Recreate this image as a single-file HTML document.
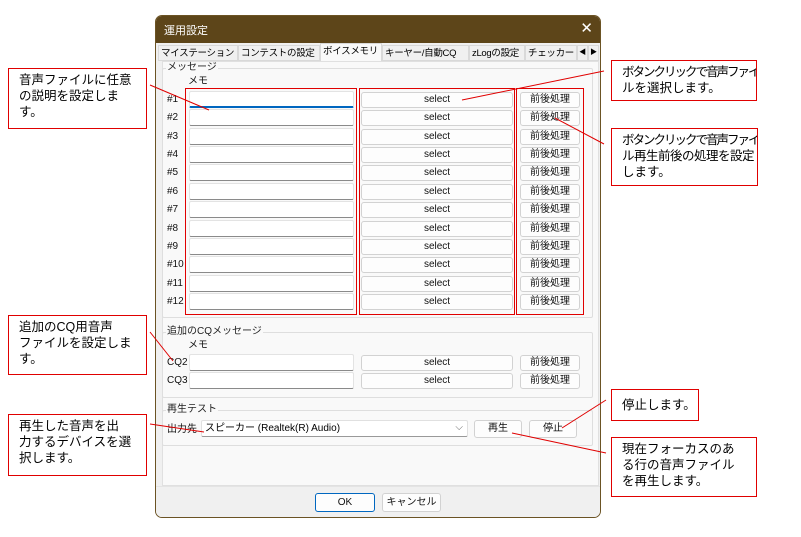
<!DOCTYPE html>
<html><head><meta charset="utf-8"><style>
*{box-sizing:border-box;margin:0;padding:0}
body{width:801px;height:537px;background:#fff;position:relative;overflow:hidden;font-family:"Liberation Sans","Noto Sans CJK JP",sans-serif;font-size:10px;color:#000}
.a{position:absolute}
.dlg{left:155px;top:15px;width:446px;height:503px;border:1px solid #6b5324;border-radius:7px;background:#f0f0f0;overflow:hidden}
.title{left:0;top:0;width:446px;height:27px;background:#5d4519;color:#fff;font-size:11px;padding:6px 0 0 8px}
.tabs{left:0;top:27px;width:446px;height:18px;background:#f0f0f0}
.tab{position:absolute;top:2px;height:16px;border:1px solid #d9d9d9;background:#f0f0f0;font-size:9.5px;letter-spacing:-0.3px;padding:1px 2px;white-space:nowrap;overflow:hidden;line-height:13px}
.page{left:6px;top:45px;width:437px;height:425px;background:#f9f9f9;border:1px solid #e0e0e0}
.grp{position:absolute;border:1px solid #dedede;border-radius:2px}
.gl{position:absolute;background:#f9f9f9;font-size:10px;padding:0 1px;color:#222;line-height:12px}
.ed{position:absolute;background:#fff;border:1px solid #e3e3e3;border-bottom:1px solid #8a8a8a;border-radius:2px;height:17px}
.bt{position:absolute;background:#fdfdfd;border:1px solid #d2d2d2;border-radius:3px;height:16px;text-align:center;font-size:10px;line-height:14px;color:#111}
.lb{position:absolute;font-size:10px;color:#111;line-height:12px}
.red{position:absolute;border:1px solid #e00000}
.call{position:absolute;border:1px solid #e00000;background:#fff;font-size:12.5px;line-height:16px;padding:3px 0 0 10px;color:#000;white-space:nowrap;overflow:hidden}
.tight{letter-spacing:-2px}
</style></head><body>
<div class="a dlg">
 <div class="a title">運用設定<span style="position:absolute;right:9px;top:3px;font-size:15px;font-weight:300">✕</span></div>
 <div class="a tabs">
  <div class="tab" style="left:2px;width:80px">マイステーション</div>
  <div class="tab" style="left:82px;width:82px">コンテストの設定</div>
  <div class="tab" style="left:164px;width:62px;top:0;height:18px;background:#f9f9f9;border-bottom:none">ボイスメモリ</div>
  <div class="tab" style="left:226px;width:87px">キーヤー/自動CQ</div>
  <div class="tab" style="left:313px;width:56px">zLogの設定</div>
  <div class="tab" style="left:369px;width:52px">チェッカー</div>
  <div class="tab" style="left:421px;width:11px;padding:0;font-size:7px;text-align:center;line-height:13px">◀</div>
  <div class="tab" style="left:432px;width:11px;padding:0;font-size:7px;text-align:center;line-height:13px">▶</div>
 </div>
 <div class="a page"></div>
 <div class="a" style="left:0;top:470px;width:446px;height:33px;background:#f0f0f0;border-top:1px solid #e4e4e4"></div>
 <div class="bt" style="left:159px;top:477px;width:60px;height:19px;border:1px solid #0067c0;line-height:17px">OK</div>
 <div class="bt" style="left:226px;top:477px;width:59px;height:19px;line-height:17px">キャンセル</div>
</div>
<div class="grp" style="left:162px;top:68px;width:431px;height:250px"></div>
<div class="gl" style="left:166px;top:62px">メッセージ</div>
<div class="lb" style="left:188px;top:76px">メモ</div>
<div class="grp" style="left:162px;top:332px;width:431px;height:66px"></div>
<div class="gl" style="left:166px;top:326px">追加のCQメッセージ</div>
<div class="lb" style="left:188px;top:340px">メモ</div>
<div class="grp" style="left:162px;top:410px;width:431px;height:36px"></div>
<div class="gl" style="left:166px;top:404px">再生テスト</div>
<div id="rows"></div>
<div class="lb" style="left:167px;top:357px">CQ2</div>
<div class="ed" style="left:189px;top:354px;width:165px"></div>
<div class="bt" style="left:361px;top:355px;width:152px">select</div>
<div class="bt" style="left:520px;top:355px;width:60px">前後処理</div>
<div class="lb" style="left:167px;top:375px">CQ3</div>
<div class="ed" style="left:189px;top:372px;width:165px"></div>
<div class="bt" style="left:361px;top:373px;width:152px">select</div>
<div class="bt" style="left:520px;top:373px;width:60px">前後処理</div>
<div class="lb" style="left:167px;top:424px">出力先</div>
<div class="a" style="left:201px;top:420px;width:267px;height:17px;background:#fff;border:1px solid #e0e0e0;border-bottom:1px solid #999;border-radius:2px;font-size:10px;padding:1px 3px;line-height:13px">スピーカー (Realtek(R) Audio)<span style="position:absolute;right:4px;top:0;color:#666">⌵</span></div>
<div class="bt" style="left:474px;top:420px;width:48px;height:18px;line-height:16px">再生</div>
<div class="bt" style="left:529px;top:420px;width:48px;height:18px;line-height:16px">停止</div>
<div class="red" style="left:185px;top:88px;width:172px;height:227px"></div>
<div class="red" style="left:359px;top:88px;width:156px;height:227px"></div>
<div class="red" style="left:516px;top:88px;width:68px;height:227px"></div>
<div class="call" style="left:8px;top:68px;width:139px;height:61px">音声ファイルに任意<br>の説明を設定しま<br>す。</div>
<div class="call" style="left:611px;top:60px;width:146px;height:41px"><span class="tight">ボタンクリックで音声ファイ</span><br>ルを選択します。</div>
<div class="call" style="left:611px;top:128px;width:147px;height:58px"><span class="tight">ボタンクリックで音声ファイ</span><br><span style="letter-spacing:-0.5px">ル再生前後の処理を設定</span><br>します。</div>
<div class="call" style="left:8px;top:315px;width:139px;height:60px">追加のCQ用音声<br>ファイルを設定しま<br>す。</div>
<div class="call" style="left:8px;top:414px;width:139px;height:62px">再生した音声を出<br>力するデバイスを選<br>択します。</div>
<div class="call" style="left:611px;top:389px;width:88px;height:32px;padding-top:7px">停止します。</div>
<div class="call" style="left:611px;top:437px;width:146px;height:60px">現在フォーカスのあ<br>る行の音声ファイル<br>を再生します。</div>
<svg class="a" style="left:0;top:0" width="801" height="537"><g stroke="#e00000" stroke-width="1" fill="none">
<line x1="150" y1="85" x2="209" y2="110"/>
<line x1="604" y1="71" x2="462" y2="100"/>
<line x1="604" y1="144" x2="555" y2="118"/>
<line x1="150" y1="332" x2="173" y2="361"/>
<line x1="150" y1="424" x2="204" y2="432"/>
<line x1="606" y1="400" x2="562" y2="428"/>
<line x1="606" y1="453" x2="512" y2="433"/>
</g></svg>
<script>
var h='';for(var i=0;i<12;i++){var t=Math.round(91+18.36*i);
h+='<div class="lb" style="left:167px;top:'+(t+3)+'px">#'+(i+1)+'</div><div class="ed" style="left:189px;top:'+t+'px;width:165px'+(i==0?';border-bottom:2px solid #0067c0':'')+'"></div><div class="bt" style="left:361px;top:'+(t+1)+'px;width:152px">select</div><div class="bt" style="left:520px;top:'+(t+1)+'px;width:60px">前後処理</div>';}
document.getElementById('rows').innerHTML=h;
</script>
</body></html>
